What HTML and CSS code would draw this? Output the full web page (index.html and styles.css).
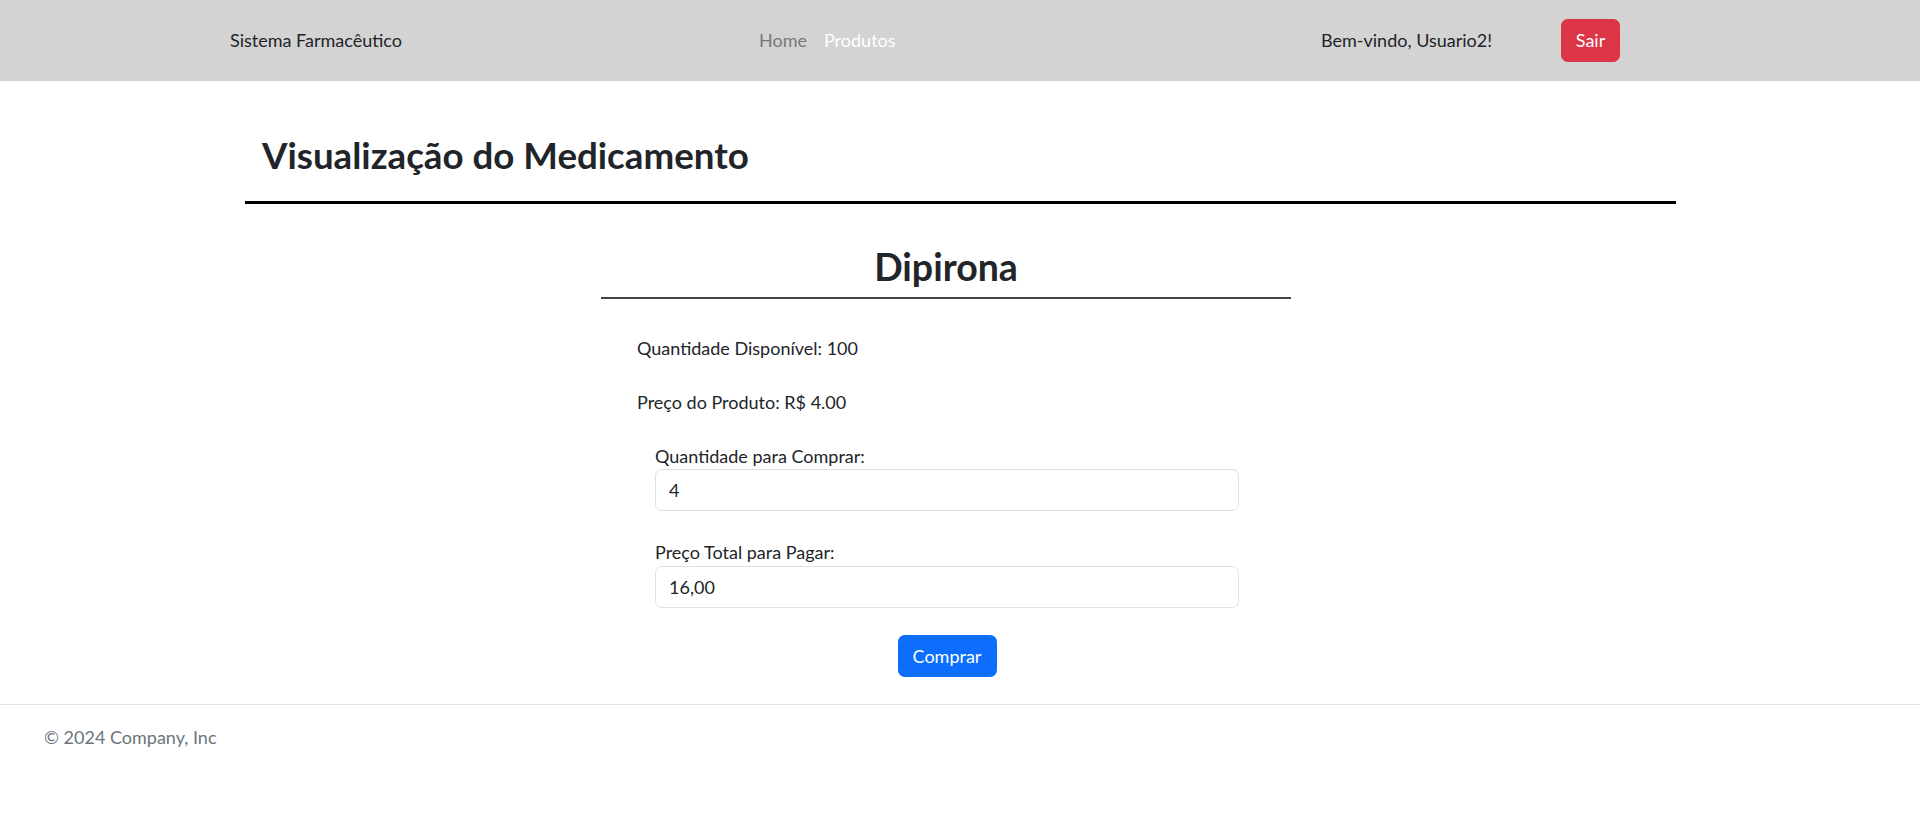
FILE: index.html
```html
<!DOCTYPE html>
<html lang="pt-BR">
<head>
<meta charset="utf-8">
<title>Visualização do Medicamento</title>
<link rel="stylesheet" href="styles.css">
</head>
<body>
<header class="navbar">
  <a class="brand" href="#">Sistema Farmacêutico</a>
  <nav class="nav-links">
    <a class="nav-link" href="#">Home</a>
    <a class="nav-link active" href="#">Produtos</a>
  </nav>
  <span class="user">Bem-vindo, Usuario2!</span>
  <button class="btn btn-sair" type="button">Sair</button>
</header>

<main class="page">
  <h1 class="page-title">Visualização do Medicamento</h1>
  <hr class="rule-thick">

  <section class="product">
    <h2 class="product-name">Dipirona</h2>
    <hr class="rule-thin">
    <p class="info">Quantidade Disponível: 100</p>
    <p class="info">Preço do Produto: R$ 4.00</p>
    <form class="buy-form">
      <div class="field">
        <label class="field-label" for="qtd">Quantidade para Comprar:</label>
        <input class="field-input" id="qtd" type="text" value="4">
      </div>
      <div class="field">
        <label class="field-label" for="total">Preço Total para Pagar:</label>
        <input class="field-input" id="total" type="text" value="16,00">
      </div>
      <div class="actions">
        <button class="btn btn-buy" type="button">Comprar</button>
      </div>
    </form>
  </section>
</main>

<footer class="footer">
  <span class="footer-text">© 2024 Company, Inc</span>
</footer>
</body>
</html>
```

FILE: styles.css
```css
* { box-sizing: border-box; }

html, body {
  margin: 0;
  padding: 0;
  background: #fff;
}

body {
  font-family: Lato, "Noto Sans", sans-serif;
  font-size: 18px;
  line-height: 26.4px;
  color: #212529;
}

a { text-decoration: none; }

.navbar {
  display: flex;
  align-items: center;
  height: 81px;
  background: #d3d3d3;
  padding: 0 300px 0 230px;
}

.brand {
  width: 529px;
  color: #212529;
}

.nav-links {
  display: flex;
  gap: 17px;
  flex: 1;
}

.nav-link { color: #787878; }
.nav-link.active { color: #fff; }

.user {
  width: 240px;
  color: #212529;
}

.btn {
  font-family: inherit;
  font-size: 18px;
  line-height: 26.4px;
  border: 1px solid transparent;
  border-radius: 6.6px;
  color: #fff;
  cursor: pointer;
  padding: 0;
}

.btn-sair {
  width: 59px;
  height: 43px;
  background: #dc3545;
  border-color: #dc3545;
}

.page {
  padding: 51px 244px 0 245px;
}

.page-title {
  margin: 0;
  padding-left: 17px;
  font-size: 36.7px;
  line-height: 46px;
  font-weight: 700;
  color: #212529;
}

.rule-thick {
  margin: 23px 0 0;
  border: 0;
  height: 3px;
  background: #000;
}

.product {
  width: 690px;
  margin: 37.5px 0 0 356px;
}

.product-name {
  margin: 0;
  text-align: center;
  font-size: 37.5px;
  line-height: 49px;
  font-weight: 700;
  color: #212529;
}

.rule-thin {
  margin: 6px 0 0;
  border: 0;
  height: 2px;
  background: #444;
}

.info {
  margin: 0;
  padding-left: 36px;
}

.info:first-of-type { margin-top: 36.3px; }
.info + .info { margin-top: 27.6px; }

.buy-form {
  padding: 0 52px 0 54px;
  margin-top: 27.6px;
}

.field + .field { margin-top: 28px; }

.field-label {
  display: block;
}

.field-input {
  display: block;
  width: 100%;
  height: 42px;
  padding: 0 13px;
  font-family: inherit;
  font-size: 18px;
  color: #212529;
  background: #fff;
  border: 1px solid #dee2e6;
  border-radius: 6.6px;
  outline: none;
}

.actions {
  display: flex;
  justify-content: center;
  margin-top: 27.4px;
}

.btn-buy {
  width: 99px;
  height: 42px;
  background: #0d6efd;
  border-color: #0d6efd;
}

.footer {
  margin-top: 27px;
  border-top: 1px solid #dee2e6;
  padding: 19px 0 0 44px;
}

.footer-text { color: #6c757d; }
```
